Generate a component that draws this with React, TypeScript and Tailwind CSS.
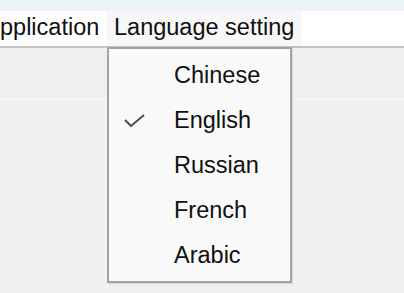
import { useState } from "react";

const languages = ["Chinese", "English", "Russian", "French", "Arabic"];

export default function App() {
  const [selected, setSelected] = useState("English");

  return (
    <div
      className="relative w-[404px] h-[293px] overflow-hidden bg-[#f0f0f0] text-[#101010]"
      style={{ fontFamily: '"Liberation Sans", Arial, sans-serif' }}
    >
      {/* title strip */}
      <div className="h-[11px] bg-[#eaf4f7]" />

      {/* menu bar */}
      <div className="flex h-[35px] bg-white text-[23.5px] leading-[33px]">
        <div className="w-[107px] whitespace-nowrap">pplication</div>
        <div className="w-[195px] bg-[#f7f7f7] pl-[7px] whitespace-nowrap">Language setting</div>
      </div>

      {/* toolbar */}
      <div className="h-[2px] bg-[#c4c4c4]" />
      <div className="h-[50px] bg-[#efefef]" />
      <div className="h-[2px] bg-[#f8f8f8]" />
      <div className="flex-1 bg-[#f0f0f0]" />

      {/* dropdown menu */}
      <div className="absolute left-[107px] top-[47px] w-[185px] h-[236px] border-2 border-[#a3a3a3] bg-[#f9f9f9] pt-[4px] shadow-[1px_1px_0_#d8d8d8]">
        {languages.map((lang) => (
          <div
            key={lang}
            onClick={() => setSelected(lang)}
            className="flex items-center h-[45px] text-[23.5px]"
          >
            <div className="w-[65px] flex items-center">
              {selected === lang && (
                <svg width="22" height="14" viewBox="0 0 22 14" className="ml-[15px]">
                  <polyline
                    points="1,6 7,12 20,1"
                    fill="none"
                    stroke="#4a4a4a"
                    strokeWidth="1.9"
                  />
                </svg>
              )}
            </div>
            <span className="leading-[45px]">{lang}</span>
          </div>
        ))}
      </div>
    </div>
  );
}
